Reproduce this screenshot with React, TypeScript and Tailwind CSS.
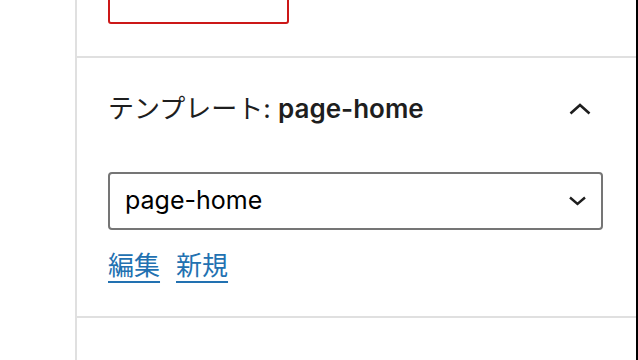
import React from "react";

const font = { fontFamily: '"Inter", "Noto Sans CJK JP", sans-serif' };

function ChevronUp() {
  return (
    <svg width="22" height="12" viewBox="0 0 22 12" fill="none">
      <path d="M1.5 10.5 L11 2 L20.5 10.5" stroke="#1e1e1e" strokeWidth="2.6" />
    </svg>
  );
}

function ChevronDown() {
  return (
    <svg width="17" height="10" viewBox="0 0 17 10" fill="none">
      <path d="M1 1.5 L8.5 8 L16 1.5" stroke="#1e1e1e" strokeWidth="2.4" />
    </svg>
  );
}

export default function App() {
  return (
    <div
      className="w-[638px] h-[360px] overflow-hidden flex bg-white text-[#1e1e1e]"
      style={font}
    >
      <div className="w-[75px] shrink-0" />
      <div className="flex-1 flex flex-col border-l-2 border-[#e0e0e0] border-r-2 border-r-black">
        {/* previous panel */}
        <div className="pl-[31px] pr-[33px] pb-[32px] border-b-2 border-[#e0e0e0]">
          <div className="w-[181px] h-[40px] mt-[-16px] border-2 border-[#cc1818] rounded-[3px]" />
        </div>

        {/* template panel */}
        <div className="pl-[31px] pr-[33px] pb-[32px] border-b-2 border-[#e0e0e0]">
          <div className="h-[102px] flex items-center justify-between">
            <div className="text-[26px] leading-none whitespace-nowrap">
              <span className="font-normal">テンプレート: </span>
              <span className="font-semibold">page-home</span>
            </div>
            <div className="mr-[12px] flex items-center">
              <ChevronUp />
            </div>
          </div>
          <div className="mt-[12px] h-[58px] border-2 border-[#757575] rounded-[4px] flex items-center justify-between pl-[15px] pr-[15px]">
            <span className="text-[25px] text-black">page-home</span>
            <ChevronDown />
          </div>
          <div className="mt-[18px] flex gap-[16px] text-[26px] leading-[36px]">
            <a href="#" className="text-[#2271b1] underline underline-offset-[6px] decoration-[2px]">編集</a>
            <a href="#" className="text-[#2271b1] underline underline-offset-[6px] decoration-[2px]">新規</a>
          </div>
        </div>

        {/* next panel */}
        <div className="pl-[31px] pr-[33px]">
          <div className="h-[112px] flex items-center">
            <div className="text-[26px] leading-none">ディスカッション</div>
          </div>
        </div>
      </div>
    </div>
  );
}
